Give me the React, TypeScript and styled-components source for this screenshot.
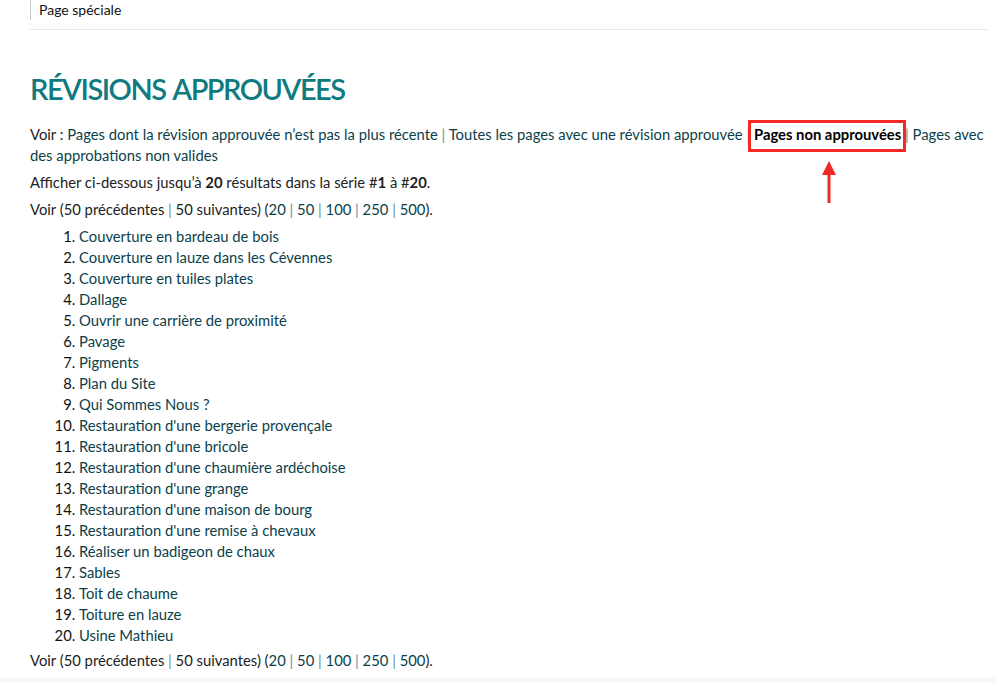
import styled, { createGlobalStyle } from 'styled-components';

const GlobalStyle = createGlobalStyle`
  html, body {
    margin: 0;
    padding: 0;
    background: #fff;
  }
  body {
    font-family: Lato, "Open Sans", "Liberation Sans", sans-serif;
    font-size: 14.8px;
    color: #222;
  }
`;

const Page = styled.div`
  padding: 0 7px 0 30px;
`;

const TopBar = styled.div`
  border-bottom: 1px solid #e8e8e8;
  padding-bottom: 9px;
`;

const Crumb = styled.div`
  border-left: 1px solid #c8c8c8;
  padding-left: 8px;
  font-size: 14px;
  line-height: 20px;
  color: #111;
`;

const Title = styled.h1`
  margin: 41px 0 17px 0;
  font-size: 29px;
  line-height: 36px;
  font-weight: 600;
  color: #0f7a80;
  letter-spacing: -1.5px;
  word-spacing: 2px;
`;

const Para = styled.p`
  margin: 0 0 6px 0;
  line-height: 21px;
`;

const Link = styled.a`
  color: #0b3f4b;
  text-decoration: none;
`;

const Sep = styled.span`
  color: #6a8c99;
`;

const Current = styled.strong`
  position: relative;
  color: #000;
  &::after {
    content: '';
    position: absolute;
    left: -6px;
    right: -5px;
    top: -5px;
    bottom: -9px;
    border: 3px solid #f22a26;
  }
`;

const Arrow = styled.svg`
  position: absolute;
  left: 67px;
  top: 36px;
  width: 16px;
  height: 42px;
  overflow: visible;
`;

const List = styled.ol`
  margin: 0 0 4px 0;
  padding-left: 49px;
  line-height: 21px;
  li::marker {
    color: #111;
  }
`;

const Footer = styled.div`
  margin-top: 6px;
  height: 20px;
  background: #f9f9f9;
`;

const items = [
  'Couverture en bardeau de bois',
  'Couverture en lauze dans les Cévennes',
  'Couverture en tuiles plates',
  'Dallage',
  'Ouvrir une carrière de proximité',
  'Pavage',
  'Pigments',
  'Plan du Site',
  'Qui Sommes Nous ?',
  "Restauration d'une bergerie provençale",
  "Restauration d'une bricole",
  "Restauration d'une chaumière ardéchoise",
  "Restauration d'une grange",
  "Restauration d'une maison de bourg",
  "Restauration d'une remise à chevaux",
  'Réaliser un badigeon de chaux',
  'Sables',
  'Toit de chaume',
  'Toiture en lauze',
  'Usine Mathieu',
];

const Pager = () => (
  <Para>
    Voir (50 précédentes <Sep>|</Sep> 50 suivantes) (<Link href="#">20</Link> <Sep>|</Sep> <Link href="#">50</Link>{' '}
    <Sep>|</Sep> <Link href="#">100</Link> <Sep>|</Sep> <Link href="#">250</Link> <Sep>|</Sep> <Link href="#">500</Link>).
  </Para>
);

export default function App() {
  return (
    <>
      <GlobalStyle />
      <Page>
        <TopBar>
          <Crumb>Page spéciale</Crumb>
        </TopBar>
        <Title>RÉVISIONS APPROUVÉES</Title>
        <Para>
          Voir : <Link href="#">Pages dont la révision approuvée n’est pas la plus récente</Link> <Sep>|</Sep>{' '}
          <Link href="#">Toutes les pages avec une révision approuvée</Link> <Sep>|</Sep>{' '}
          <Current>
            Pages non approuvées
            <Arrow viewBox="0 0 16 42">
              <polygon points="8,0 1,14 15,14" fill="#f22a26" />
              <rect x="6.5" y="12" width="3" height="30" fill="#f22a26" />
            </Arrow>
          </Current>{' '}
          <Sep>|</Sep> <Link href="#">Pages avec des approbations non valides</Link>
        </Para>
        <Para>
          Afficher ci-dessous jusqu’à <strong>20</strong> résultats dans la série #<strong>1</strong> à #<strong>20</strong>.
        </Para>
        <Pager />
        <List>
          {items.map((t) => (
            <li key={t}>
              <Link href="#">{t}</Link>
            </li>
          ))}
        </List>
        <Pager />
      </Page>
      <Footer />
    </>
  );
}
